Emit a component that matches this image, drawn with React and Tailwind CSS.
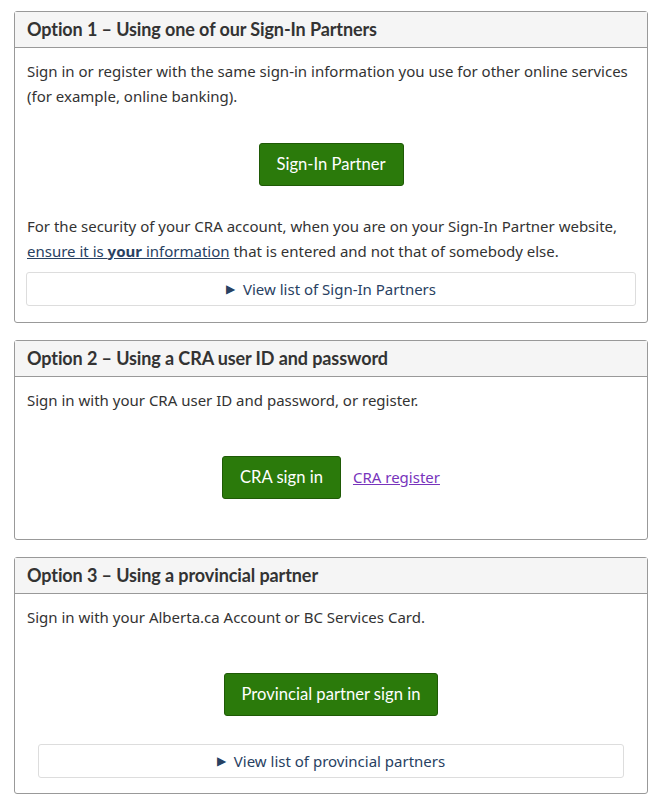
import React from 'react';

function Panel({ title, children, bottom = 'pb-[15px]' }) {
  return (
    <section className="border border-[#999] rounded-[3px] bg-white">
      <h2 className="bg-[#f5f5f5] border-b border-[#999] px-3 py-[6px] text-[18px] leading-[23px] font-bold text-[#333] font-['Lato',sans-serif] tracking-[-0.1px]">
        {title}
      </h2>
      <div className={`px-3 pt-[11px] ${bottom} text-[15px] leading-[25px] text-[#333] font-['Noto_Sans',sans-serif]`}>
        {children}
      </div>
    </section>
  );
}

function GreenButton({ children }) {
  return (
    <button className="bg-[#2b7a0b] border border-[#1f5a06] rounded-[3px] px-[17px] py-[9px] text-white text-[16.6px] leading-[23px] font-['Lato',sans-serif]">
      {children}
    </button>
  );
}

function Details({ children, className = '' }) {
  return (
    <div className={`border border-[#ddd] rounded-[3px] py-[5px] flex items-center justify-center gap-2 text-[#284162] text-[15px] leading-[22px] ${className}`}>
      <span className="text-[12px]">&#9654;</span>
      <span>{children}</span>
    </div>
  );
}

export default function App() {
  return (
    <div className="bg-white px-[14px] pt-[11px] pb-[10px] flex flex-col gap-[17px] w-[662px]">
      <Panel title="Option 1 – Using one of our Sign-In Partners" bottom="pb-[16px]">
        <p>Sign in or register with the same sign-in information you use for other online services (for example, online banking).</p>
        <div className="flex justify-center mt-[34px] mb-[28px]">
          <GreenButton>Sign-In Partner</GreenButton>
        </div>
        <p>
          For the security of your CRA account, when you are on your Sign-In Partner website,{' '}
          <a className="text-[#284162] underline">ensure it is <strong>your</strong> information</a> that is entered and not that of somebody else.
        </p>
        <Details className="mt-[8px] -mx-px">View list of Sign-In Partners</Details>
      </Panel>

      <Panel title="Option 2 – Using a CRA user ID and password">
        <p>Sign in with your CRA user ID and password, or register.</p>
        <div className="flex justify-center items-center gap-3 mt-[43px] mb-[25px]">
          <GreenButton>CRA sign in</GreenButton>
          <a className="text-[#7834bc] underline">CRA register</a>
        </div>
      </Panel>

      <Panel title="Option 3 – Using a provincial partner">
        <p>Sign in with your Alberta.ca Account or BC Services Card.</p>
        <div className="flex justify-center mt-[43px] mb-[28px]">
          <GreenButton>Provincial partner sign in</GreenButton>
        </div>
        <Details className="mx-[11px]">View list of provincial partners</Details>
      </Panel>
    </div>
  );
}
